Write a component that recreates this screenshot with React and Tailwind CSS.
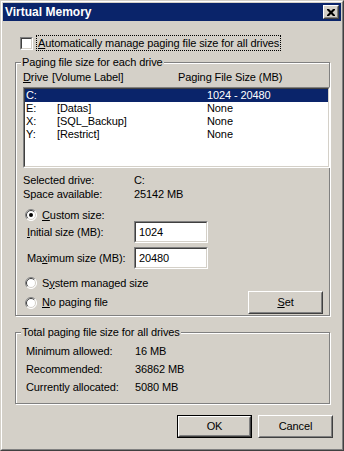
import React from "react";

const FONT = "font-['Liberation_Sans',Arial,sans-serif]";

function Sunken({ className = "", children }) {
  return (
    <div className={`border border-t-[#808080] border-l-[#808080] border-r-white border-b-white ${className}`}>
      <div className="h-full w-full border border-t-[#404040] border-l-[#404040] border-r-[#d4d0c8] border-b-[#d4d0c8] bg-white">
        {children}
      </div>
    </div>
  );
}

function Button({ children, isDefault = false, className = "" }) {
  const body = (
    <div className="h-full w-full border border-t-white border-l-white border-r-[#404040] border-b-[#404040]">
      <div className="flex h-full w-full items-center justify-center border border-t-[#d4d0c8] border-l-[#d4d0c8] border-r-[#808080] border-b-[#808080]">
        {children}
      </div>
    </div>
  );
  return (
    <button type="button" className={`block h-[23px] w-[75px] ${isDefault ? "border border-black" : ""} ${className}`}>
      {body}
    </button>
  );
}

function Radio({ checked = false }) {
  return (
    <svg width="12" height="12" viewBox="0 0 12 12" className="shrink-0">
      <circle cx="6" cy="6" r="5.5" fill="#fff" />
      <path d="M2.1 9.9 A5.5 5.5 0 0 1 9.9 2.1" stroke="#808080" fill="none" />
      <path d="M2.8 9.2 A4.5 4.5 0 0 1 9.2 2.8" stroke="#404040" fill="none" />
      <path d="M9.9 2.1 A5.5 5.5 0 0 1 2.1 9.9" stroke="#fff" fill="none" />
      <path d="M9.2 2.8 A4.5 4.5 0 0 1 2.8 9.2" stroke="#d4d0c8" fill="none" />
      {checked && <circle cx="6" cy="6" r="2" fill="#000" />}
    </svg>
  );
}

function Group({ label, className = "", children }) {
  return (
    <div className={`relative border border-[#808080] shadow-[inset_1px_1px_0_#fff,1px_1px_0_#fff] ${className}`}>
      <span className="absolute left-[5px] top-[-7px] bg-[#d4d0c8] px-[1px] leading-[13px]">{label}</span>
      {children}
    </div>
  );
}

const drives = [
  { d: "C:", label: "", size: "1024 - 20480", selected: true },
  { d: "E:", label: "[Datas]", size: "None" },
  { d: "X:", label: "[SQL_Backup]", size: "None" },
  { d: "Y:", label: "[Restrict]", size: "None" },
];

export default function App() {
  return (
    <div className={`h-[451px] w-[344px] overflow-hidden bg-[#d4d0c8] text-[11px] leading-[13px] tracking-[-0.1px] text-black ${FONT}`}>
      <div className="h-full w-full border border-t-[#d4d0c8] border-l-[#d4d0c8] border-r-[#404040] border-b-[#404040]">
        <div className="h-full w-full border border-t-white border-l-white border-r-[#808080] border-b-[#808080] p-px">
          {/* title bar */}
          <div className="flex h-[18px] items-center justify-between bg-[#0a246a] pl-[2px] pr-[2px]">
            <span className="text-[12px] font-bold tracking-normal text-white">Virtual Memory</span>
            <div className="h-[14px] w-[16px] border border-t-white border-l-white border-r-[#404040] border-b-[#404040]">
              <div className="flex h-full w-full items-center justify-center border border-t-[#d4d0c8] border-l-[#d4d0c8] border-r-[#808080] border-b-[#808080] bg-[#d4d0c8]">
                <svg width="8" height="7" viewBox="0 0 8 7">
                  <path d="M0 0h2l2 2 2-2h2v1l-2.5 2.5L8 6v1H6L4 5 2 7H0V6l2.5-2.5L0 1z" fill="#000" />
                </svg>
              </div>
            </div>
          </div>

          {/* auto manage */}
          <div className="ml-[17px] mt-[14px] flex h-[16px] items-center">
            <Sunken className="h-[13px] w-[13px]" />
            <span className="ml-[3px] flex h-[16px] items-center border border-dotted border-black px-[1px]">
              <span><u>A</u>utomatically manage paging file size for all drives</span>
            </span>
          </div>

          {/* paging per drive */}
          <Group label="Paging file size for each drive" className="ml-[12px] mt-[11px] h-[254px] w-[315px]">
            <div className="mt-[8px] flex h-[13px] pl-[7px]">
              <span className="w-[29px]"><u>D</u>rive</span>
              <span className="w-[126px]">[Volume Label]</span>
              <span>Paging File Size (MB)</span>
            </div>
            <Sunken className="ml-[7px] mt-[3px] h-[81px] w-[307px]">
              {drives.map((r) => (
                <div
                  key={r.d}
                  className={`flex h-[13px] pl-[1px] ${r.selected ? "bg-[#0a246a] text-white" : ""}`}
                >
                  <span className="w-[31px]">{r.d}</span>
                  <span className="w-[150px]">{r.label}</span>
                  <span>{r.size}</span>
                </div>
              ))}
            </Sunken>

            <div className="mt-[5px] pl-[7px] leading-[14px]">
              <div className="flex h-[14px]">
                <span className="w-[111px]">Selected drive:</span>
                <span>C:</span>
              </div>
              <div className="flex h-[14px]">
                <span className="w-[111px]">Space available:</span>
                <span>25142 MB</span>
              </div>
            </div>

            <div className="mt-[8px] flex h-[12px] items-center pl-[9px]">
              <Radio checked />
              <span className="ml-[5px]"><u>C</u>ustom size:</span>
            </div>
            <div className="flex h-[22px] items-center pl-[11px]">
              <span className="w-[107px]"><u>I</u>nitial size (MB):</span>
              <Sunken className="h-[22px] w-[74px]">
                <div className="flex h-full items-center pl-[3px]">1024</div>
              </Sunken>
            </div>
            <div className="mt-[4px] flex h-[22px] items-center pl-[11px]">
              <span className="w-[107px]">Ma<u>x</u>imum size (MB):</span>
              <Sunken className="h-[22px] w-[74px]">
                <div className="flex h-full items-center pl-[3px]">20480</div>
              </Sunken>
            </div>
            <div className="mt-[8px] flex h-[12px] items-center pl-[9px]">
              <Radio />
              <span className="ml-[5px]">S<u>y</u>stem managed size</span>
            </div>
            <div className="mt-[2px] flex h-[23px] items-center pl-[9px]">
              <Radio />
              <span className="ml-[5px]"><u>N</u>o paging file</span>
              <Button className="ml-auto mr-[6px]"><span><u>S</u>et</span></Button>
            </div>
          </Group>

          {/* totals */}
          <Group label="Total paging file size for all drives" className="ml-[12px] mt-[16px] h-[72px] w-[315px]">
            <div className="mt-[9px] pl-[10px] leading-[18px]">
              {[
                ["Minimum allowed:", "16 MB"],
                ["Recommended:", "36862 MB"],
                ["Currently allocated:", "5080 MB"],
              ].map(([k, v]) => (
                <div key={k} className="flex h-[18px]">
                  <span className="w-[109px]">{k}</span>
                  <span>{v}</span>
                </div>
              ))}
            </div>
          </Group>

          <div className="mt-[11px] flex justify-end gap-[6px] pr-[8px]">
            <Button isDefault>OK</Button>
            <Button>Cancel</Button>
          </div>
        </div>
      </div>
    </div>
  );
}
